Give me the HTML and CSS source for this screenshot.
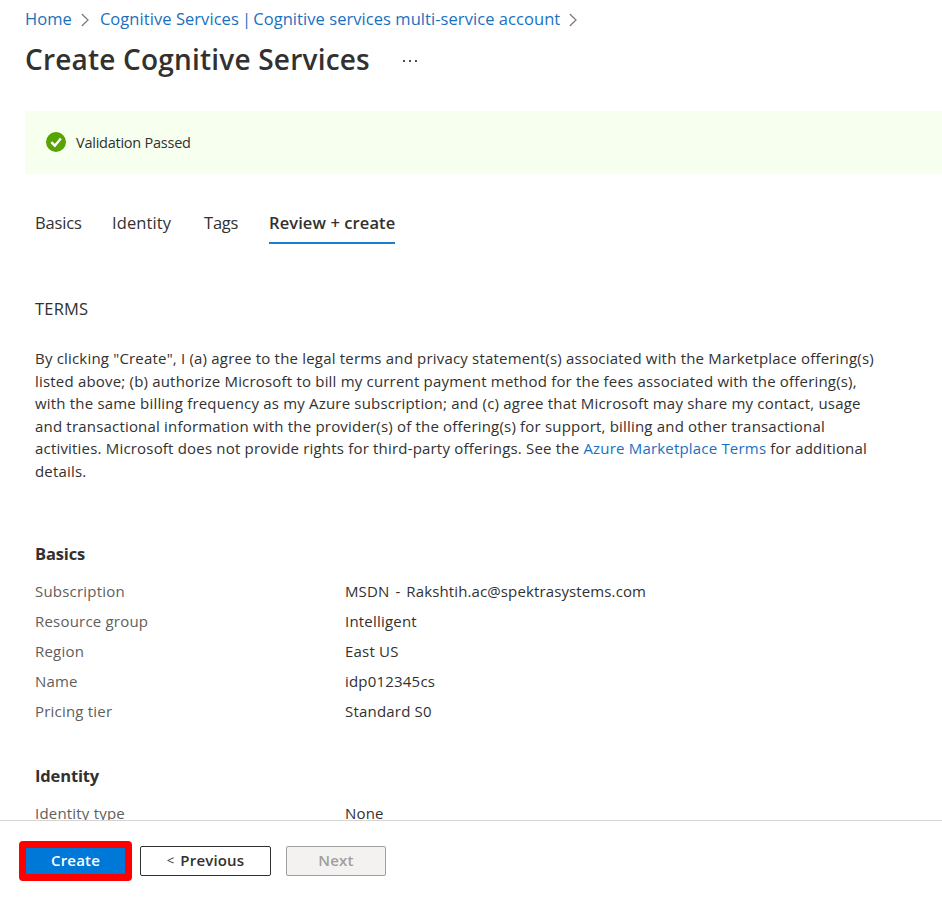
FILE: index.html
```
<!DOCTYPE html>
<html lang="en">
<head>
<meta charset="utf-8">
<title>Create Cognitive Services</title>
<link rel="stylesheet" href="styles.css">
</head>
<body>
<div class="page">
  <main class="content">
    <nav class="breadcrumb">
      <a>Home</a>
      <svg class="chevron" viewBox="0 0 8 14"><path d="M0.8 1l6.2 6-6.2 6"/></svg>
      <a>Cognitive Services<span class="bar"> | </span>Cognitive services multi-service account</a>
      <svg class="chevron" viewBox="0 0 8 14"><path d="M0.8 1l6.2 6-6.2 6"/></svg>
    </nav>
    <header class="title-row">
      <h1>Create Cognitive Services</h1>
      <svg class="more" viewBox="0 0 14 2"><path d="M0 0h2v2H0zM6 0h2v2H6zM12 0h2v2h-2z"/></svg>
    </header>
    <div class="banner">
      <svg class="check" viewBox="0 0 20 20"><circle cx="10" cy="10" r="10"/><path d="M5.3 10.2l3.5 3.5 6-7.3"/></svg>
      <span>Validation Passed</span>
    </div>
    <nav class="tabs">
      <a class="tab tab-basics">Basics</a>
      <a class="tab tab-identity">Identity</a>
      <a class="tab tab-tags">Tags</a>
      <a class="tab active">Review + create</a>
    </nav>
    <section class="terms">
      <h2>TERMS</h2>
      <p>
        By clicking "Create", I (a) agree to the legal terms and privacy statement(s) associated with the Marketplace offering(s)<br>
        listed above; (b) authorize Microsoft to bill my current payment method for the fees associated with the offering(s),<br>
        with the same billing frequency as my Azure subscription; and (c) agree that Microsoft may share my contact, usage<br>
        and transactional information with the provider(s) of the offering(s) for support, billing and other transactional<br>
        activities. Microsoft does not provide rights for third-party offerings. See the <a>Azure Marketplace Terms</a> for additional<br>
        details.
      </p>
    </section>
    <section class="group">
      <h3>Basics</h3>
      <dl>
        <dt>Subscription</dt><dd class="account">MSDN - Rakshtih.ac@spektrasystems.com</dd>
        <dt>Resource group</dt><dd>Intelligent</dd>
        <dt>Region</dt><dd>East US</dd>
        <dt>Name</dt><dd>idp012345cs</dd>
        <dt>Pricing tier</dt><dd>Standard S0</dd>
      </dl>
    </section>
    <section class="group">
      <h3>Identity</h3>
      <dl>
        <dt>Identity type</dt><dd>None</dd>
      </dl>
    </section>
  </main>
  <footer class="actions">
    <div class="highlight"><button class="btn primary">Create</button></div>
    <button class="btn previous"><span class="lt">&lt;</span><span>Previous</span></button>
    <button class="btn next" disabled>Next</button>
  </footer>
</div>
</body>
</html>
```

FILE: styles.css
```
* { box-sizing: border-box; }
body {
  margin: 0;
  background: #fff;
  color: #323130;
  font-family: "Open Sans", "Noto Sans", sans-serif;
  font-size: 15px;
  letter-spacing: 0.2px;
}
h1, h2, h3, p, dl, dd { margin: 0; }
a { color: #1a70c0; }
.page { display: flex; flex-direction: column; height: 908px; overflow: hidden; }
.content { flex: none; height: 820px; overflow: hidden; padding-left: 25px; }
.breadcrumb { display: flex; align-items: center; height: 37px; font-size: 16.5px; letter-spacing: 0.06px; white-space: nowrap; }
.bar { letter-spacing: -1.1px; }
.chevron { width: 8px; height: 14px; margin: 2px 11px 0 9px; fill: none; stroke: #797775; stroke-width: 1.2; }
.title-row { display: flex; align-items: center; height: 44px; }
h1 { font-size: 28px; font-weight: 600; line-height: 44px; letter-spacing: 0.2px; white-space: nowrap; }
.more { width: 14px; height: 2px; margin: 4px 0 0 33px; fill: #504e4c; }
.banner { display: flex; align-items: center; gap: 10px; height: 63px; margin-top: 30px; padding-left: 21px; background: #f7ffef; font-size: 14.5px; letter-spacing: -0.24px; }
.check { width: 20px; height: 20px; margin-top: -1px; fill: #57a300; }
.check path { fill: none; stroke: #fff; stroke-width: 2.4; }
.tabs { display: flex; height: 45px; margin: 26px 0 0 10px; font-size: 16.5px; line-height: 46px; letter-spacing: 0; white-space: nowrap; }
.tab { color: #323130; }
.tab-basics { width: 77px; letter-spacing: -0.15px; }
.tab-identity { width: 92px; letter-spacing: 0.1px; }
.tab-tags { width: 65px; letter-spacing: -0.2px; }
.active { width: 126px; height: 44px; border-bottom: 2px solid #1a7ed0; font-weight: 600; letter-spacing: 0.1px; }
.terms { padding: 49px 0 0 10px; height: 297px; }
h2 { font-size: 16.5px; font-weight: 400; line-height: 30px; }
.terms p { margin-top: 23px; line-height: 22.5px; letter-spacing: 0.19px; white-space: nowrap; }
.group { padding-left: 10px; height: 222px; }
h3 { font-size: 16.5px; font-weight: 700; line-height: 24px; letter-spacing: -0.15px; }
dl { display: grid; grid-template-columns: 310px 1fr; grid-auto-rows: 30px; line-height: 30px; margin-top: 10px; }
dt { color: #605e5c; }
.account { letter-spacing: 0.12px; word-spacing: 2px; }
.actions { display: flex; flex: 1; align-items: flex-start; padding: 20px 0 0 19px; border-top: 1px solid #d6d5d4; }
.highlight { display: flex; width: 113px; height: 40px; border: 7px solid #f00; border-radius: 4px; background: #f00; }
.btn { display: flex; align-items: center; justify-content: center; padding: 0 0 2px; font: 600 15px "Open Sans", sans-serif; letter-spacing: 0.17px; border-radius: 2px; }
.primary { width: 99px; height: 26px; border: 0; border-radius: 0; background: #0078d7; color: #fff; }
.previous { width: 131px; height: 30px; margin: 5px 15px 0 8px; gap: 6px; border: 1px solid #323130; background: #fff; color: #323130; }
.lt { font-size: 13px; font-weight: 400; }
.next { width: 100px; height: 30px; margin-top: 5px; border: 1px solid #a19f9d; background: #f3f2f1; color: #a19f9d; }
```
